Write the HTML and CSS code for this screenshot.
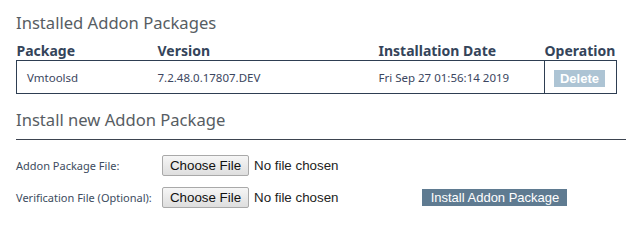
FILE: index.html
```html
<!DOCTYPE html>
<html>
<head>
<meta charset="utf-8">
<link rel="stylesheet" href="styles.css">
</head>
<body>
<div class="page">
  <h2 class="title">Installed Addon Packages</h2>
  <table class="pkgs">
    <colgroup>
      <col class="c1"><col class="c2"><col class="c3"><col class="c4">
    </colgroup>
    <thead>
      <tr><th>Package</th><th>Version</th><th>Installation Date</th><th>Operation</th></tr>
    </thead>
    <tbody>
      <tr>
        <td class="name">Vmtoolsd</td>
        <td>7.2.48.0.17807.DEV</td>
        <td>Fri Sep 27 01:56:14 2019</td>
        <td class="op"><button class="del" disabled>Delete</button></td>
      </tr>
    </tbody>
  </table>
  <h2 class="title title2">Install new Addon Package</h2>
  <div class="rule"></div>
  <div class="form">
    <div class="row">
      <label class="lbl lbl1">Addon Package File:</label>
      <span class="file"><span class="choose">Choose File</span><span class="none">No file chosen</span></span>
    </div>
    <div class="row">
      <label class="lbl">Verification File (Optional):</label>
      <span class="file"><span class="choose">Choose File</span><span class="none">No file chosen</span></span>
      <button class="install">Install Addon Package</button>
    </div>
  </div>
</div>
</body>
</html>
```
FILE: styles.css
```css
html, body { margin: 0; padding: 0; background: #fff; }
.page { padding: 0 10px 0 16px; font-family: "Noto Sans", "Open Sans", sans-serif; }
.title { margin: 0; padding-top: 12px; font-size: 16.6px; font-weight: normal; color: #575d63; line-height: 22px; height: 22px; }
.pkgs { margin-top: 8px; border-collapse: collapse; table-layout: fixed; width: 600px; }
.c1 { width: 141px; } .c2 { width: 221px; } .c3 { width: 166px; } .c4 { width: 72px; }
.pkgs th { text-align: left; font-size: 14px; font-weight: bold; color: #34445a; padding: 0; height: 18px; line-height: 18px; }
.pkgs tbody tr { border: 1px solid #2e3e52; }
.pkgs td { font-size: 11.5px; color: #3b4660; height: 30px; padding: 0; }
.pkgs td.name { padding-left: 10px; }
.pkgs td.op { border-left: 1px solid #2e3e52; padding-left: 9px; padding-top: 2px; }
.del { font-family: "Liberation Sans", Arial, sans-serif; font-size: 13px; font-weight: bold; color: #fff; background: #adc4d4; border: 0; width: 51px; height: 17px; padding: 0; display: block; }
.title2 { padding-top: 15px; }
.rule { margin-top: 8px; height: 1px; background: #3d4450; margin-right: -10px; }
.form { padding-top: 15px; }
.row { display: flex; align-items: center; height: 21px; margin-bottom: 11px; }
.lbl { font-size: 11px; color: #3d4c60; width: 146px; white-space: nowrap; }
.file { display: flex; align-items: center; font-family: "Liberation Sans", Arial, sans-serif; font-size: 13.33px; color: #222; }
.choose { box-sizing: border-box; width: 87px; height: 21px; border: 1px solid #a9a9a9; border-radius: 2px; background: linear-gradient(#f6f6f6, #dedede); color: #111; display: flex; align-items: center; justify-content: center; }
.none { margin-left: 5px; }
.install { margin-left: 84px; font-family: "Liberation Sans", Arial, sans-serif; font-size: 13px; color: #fff; background: #5f7b91; border: 0; width: 145px; height: 17px; padding: 0; }
```
